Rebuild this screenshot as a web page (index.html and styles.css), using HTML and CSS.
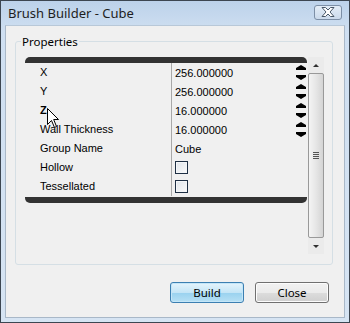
FILE: index.html
```html
<!DOCTYPE html>
<html lang="en">

<head>
    <meta charset="UTF-8">
    <meta name="viewport" content="width=device-width, initial-scale=1.0">
    <title>Brush Builder - Cube</title>
    <link rel="stylesheet" href="styles.css">
</head>

<body>
    <div class="window">
        <div class="titlebar">
            <span class="title">Brush Builder - Cube</span>
            <div class="close-x">
                <svg width="16" height="10" viewBox="0 0 16 10">
                    <path d="M2 0.5 L5.5 0.5 L8 3 L10.5 0.5 L14 0.5 L10 5 L14 9.5 L10.5 9.5 L8 7 L5.5 9.5 L2 9.5 L6 5 Z" fill="#fff" stroke="#4a5868" stroke-width="1" />
                </svg>
            </div>
        </div>

        <div class="content">
            <fieldset class="group">
                <legend>Properties</legend>
                <div class="grid-wrap">
                    <div class="grid">
                        <div class="row">
                            <div class="name">X</div>
                            <div class="value">256.000000<span class="spin"></span></div>
                        </div>
                        <div class="row">
                            <div class="name">Y</div>
                            <div class="value">256.000000<span class="spin"></span></div>
                        </div>
                        <div class="row">
                            <div class="name bold">Z</div>
                            <div class="value">16.000000<span class="spin"></span></div>
                        </div>
                        <div class="row">
                            <div class="name">Wall Thickness</div>
                            <div class="value">16.000000<span class="spin"></span></div>
                        </div>
                        <div class="row">
                            <div class="name">Group Name</div>
                            <div class="value">Cube</div>
                        </div>
                        <div class="row">
                            <div class="name">Hollow</div>
                            <div class="value"><span class="check"></span></div>
                        </div>
                        <div class="row">
                            <div class="name">Tessellated</div>
                            <div class="value"><span class="check"></span></div>
                        </div>
                    </div>
                    <div class="scrollbar">
                        <div class="arrow up"></div>
                        <div class="thumb"><span class="grip"></span></div>
                        <div class="arrow down"></div>
                    </div>
                </div>
            </fieldset>

            <div class="buttons">
                <button class="btn default">Build</button>
                <button class="btn">Close</button>
            </div>
        </div>

        <!-- mouse pointer over the Z row -->
        <svg class="cursor" width="13" height="21" viewBox="0 0 13 21">
            <path d="M0.5 0.5 L0.5 16.5 L4.5 12.5 L7.5 19.5 L9.5 18.5 L6.7 11.5 L11.5 11.5 Z" fill="#fff" stroke="#000" stroke-width="1" stroke-linejoin="miter" />
        </svg>
    </div>
</body>

</html>
```

FILE: styles.css
```css
* {
    box-sizing: border-box;
}

body {
    margin: 0;
    background: #ffffff;
    font-family: "Noto Sans", "Liberation Sans", sans-serif;
    font-size: 12px;
    color: #000;
}

.window {
    position: relative;
    width: 350px;
    height: 323px;
    border: 1px solid #3c4651;
    background: linear-gradient(#bcd2ea, #cfdff1 30px, #d6e4f3);
    display: flex;
    flex-direction: column;
}

.titlebar {
    height: 24px;
    display: flex;
    align-items: center;
    justify-content: space-between;
    padding: 0 7px 0 7px;
}

.title {
    font-size: 13px;
    color: #1e1e1e;
    margin-top: -1px;
}

.close-x {
    width: 28px;
    height: 15px;
    margin-top: -2px;
    border: 1px solid #7d8fa6;
    border-radius: 3px;
    background: linear-gradient(#e4edf7, #cbdaeb);
    display: flex;
    align-items: center;
    justify-content: center;
}

.content {
    flex: 1;
    margin: 0 4px 4px 4px;
    background: #f0f0f0;
    border: 1px solid #a9b8c8;
    border-top-color: #b8c8d8;
    padding: 8px 11px 0 9px;
}

.group {
    margin: 0;
    padding: 8px 8px 11px 9px;
    border: 1px solid #d5dfe5;
    border-radius: 3px;
    height: 231px;
}

.group legend {
    padding: 0 1px;
    margin-left: -4px;
    font-size: 11.5px;
    line-height: 15px;
}

.grid-wrap {
    display: flex;
    height: 197px;
}

.grid {
    width: 282px;
    height: 146px;
    border-top: 6px solid #333;
    border-bottom: 6px solid #333;
    border-radius: 5px;
    font-family: "Liberation Sans", sans-serif;
    font-size: 11px;
}

.row {
    display: flex;
    height: 19px;
    align-items: center;
}

.name {
    width: 147px;
    padding-left: 15px;
    height: 19px;
    line-height: 19px;
    border-right: 1px solid #a8a8a8;
}

.bold {
    font-weight: bold;
}

.value {
    flex: 1;
    display: flex;
    align-items: center;
    padding-left: 3px;
    height: 19px;
}

.spin {
    margin-left: auto;
    margin-right: 1px;
    width: 10px;
    height: 17px;
    background: url("data:image/svg+xml;utf8,<svg xmlns='http://www.w3.org/2000/svg' width='10' height='17'><path d='M5 1 L10 4 L10 6 L0 6 L0 4 Z M0 11 L10 11 L10 13 L5 16 L0 13 Z' fill='%23000'/></svg>") no-repeat;
}

.check {
    width: 13px;
    height: 13px;
    border: 1px solid #1e2f44;
    background: linear-gradient(135deg, #dfe4ea, #fbfbfb);
    box-shadow: inset 0 0 0 1px #f4f6f8;
}

.scrollbar {
    width: 16px;
    margin-left: 1px;
    background: #ebebeb;
    display: flex;
    flex-direction: column;
}

.arrow {
    height: 16px;
    display: flex;
    align-items: center;
    justify-content: center;
}

.arrow::before {
    content: "";
    border-left: 3px solid transparent;
    border-right: 3px solid transparent;
}

.up::before {
    border-bottom: 3px solid #303030;
}

.down::before {
    border-top: 3px solid #303030;
}

.thumb {
    flex: 1;
    border: 1px solid #999;
    border-radius: 2px;
    background: linear-gradient(90deg, #f4f4f4, #e6e6e6 50%, #d4d4d4);
    display: flex;
    align-items: center;
    justify-content: center;
}

.grip {
    width: 6px;
    height: 7px;
    background: repeating-linear-gradient(#555 0 1px, transparent 1px 2px);
}

.buttons {
    display: flex;
    justify-content: flex-end;
    gap: 11px;
    margin-top: 17px;
    padding-right: 4px;
}

.btn {
    width: 74px;
    height: 21px;
    font-family: "Noto Sans", "Liberation Sans", sans-serif;
    font-size: 11.5px;
    padding: 0;
    border: 1px solid #707070;
    border-radius: 3px;
    background: linear-gradient(#f2f2f2 0, #ebebeb 50%, #dddddd 50%, #cfcfcf);
    box-shadow: inset 0 0 0 1px #fcfcfc;
    color: #000;
}

.btn.default {
    border-color: #3c7fb1;
    background: linear-gradient(#e5f4fc 0, #c4e5f6 50%, #98d1ef 50%, #b6e0f4);
    box-shadow: inset 0 0 0 1px #c4e6f8;
}

.cursor {
    position: absolute;
    left: 46px;
    top: 107px;
}
```
